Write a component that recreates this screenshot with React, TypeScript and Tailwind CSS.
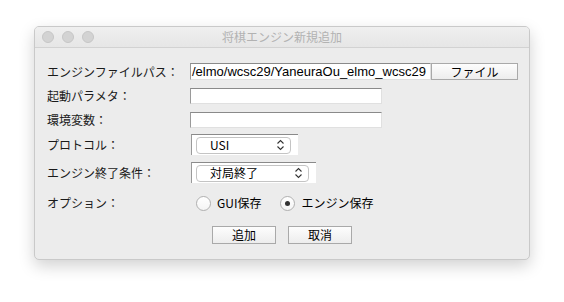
import React from 'react';

const font = { fontFamily: '"Noto Sans CJK JP", "Liberation Sans", sans-serif' };

function Field({ value, width }: { value?: string; width: number }) {
  return (
    <div
      className="h-full bg-white border-t border-l border-t-[#8a8a8a] border-l-[#9a9a9a] border-r border-b border-r-[#e0e0e0] border-b-[#e0e0e0] flex items-center overflow-hidden whitespace-nowrap text-[13px] leading-none text-black pl-[1px]"
      style={{ width, fontFamily: '"Liberation Sans", sans-serif' }}
    >
      {value}
    </div>
  );
}

function Chevrons() {
  return (
    <svg width="9" height="12" viewBox="0 0 9 12" fill="none" stroke="#333" strokeWidth="1.1">
      <path d="M1.5 4.5 L4.5 1.5 L7.5 4.5" />
      <path d="M1.5 7.5 L4.5 10.5 L7.5 7.5" />
    </svg>
  );
}

function Select({ label, width }: { label: string; width: number }) {
  return (
    <div
      className="h-full bg-white border-t border-l border-t-[#8a8a8a] border-l-[#9a9a9a] flex items-center pl-[4px] pr-[7px]"
      style={{ width }}
    >
      <div className="flex-1 h-[17px] rounded-[4px] border border-[#c4c4c4] flex items-center justify-between pl-[13px] pr-[5px] text-[12px] leading-none text-black">
        <span>{label}</span>
        <Chevrons />
      </div>
    </div>
  );
}

function Radio({ checked, label }: { checked?: boolean; label: string }) {
  return (
    <div className="flex items-center gap-[6px]">
      <div className="w-[15px] h-[15px] rounded-full border border-[#b0b0b0] bg-gradient-to-b from-white to-[#f4f4f4] flex items-center justify-center">
        {checked && <div className="w-[5px] h-[5px] rounded-full bg-[#333]" />}
      </div>
      <span className="text-[12px] leading-none text-black">{label}</span>
    </div>
  );
}

function Btn({ children, width }: { children: React.ReactNode; width: number }) {
  return (
    <div
      className="h-full border border-[#a9a9a9] bg-gradient-to-b from-[#fdfdfd] to-[#ededed] flex items-center justify-center text-[12px] leading-none text-black"
      style={{ width }}
    >
      {children}
    </div>
  );
}

function Row({ label, h, mt, children }: { label: string; h: number; mt: number; children: React.ReactNode }) {
  return (
    <div className="flex items-center" style={{ height: h, marginTop: mt }}>
      <div className="w-[143px] text-[12px] leading-none text-[#1a1a1a] whitespace-nowrap">{label}</div>
      <div className="h-full flex items-center">{children}</div>
    </div>
  );
}

export default function App() {
  return (
    <div className="w-[564px] h-[302px] bg-white overflow-hidden" style={font}>
      <div className="ml-[34px] mt-[26px] w-[496px] h-[234px] rounded-[5px] border border-[#c9c9c9] bg-[#ececec] shadow-[0_6px_16px_rgba(0,0,0,0.18)] overflow-hidden flex flex-col">
        <div className="h-[21px] shrink-0 relative flex items-center border-b border-[#d2d2d2] bg-gradient-to-b from-[#efefef] to-[#e6e6e6]">
          <div className="flex gap-[8px] pl-[7px]">
            <div className="w-[12px] h-[12px] rounded-full bg-[#d3d3d3] border border-[#c6c6c6]" />
            <div className="w-[12px] h-[12px] rounded-full bg-[#d3d3d3] border border-[#c6c6c6]" />
            <div className="w-[12px] h-[12px] rounded-full bg-[#d3d3d3] border border-[#c6c6c6]" />
          </div>
          <div className="absolute inset-0 flex items-center justify-center text-[12px] text-[#b2b2b2] leading-none">
            将棋エンジン新規追加
          </div>
        </div>
        <div className="pl-[12px] flex flex-col">
          <Row label="エンジンファイルパス：" h={17} mt={15}>
            <Field value="/elmo/wcsc29/YaneuraOu_elmo_wcsc29" width={241} />
            <Btn width={87}>ファイル</Btn>
          </Row>
          <Row label="起動パラメタ：" h={16} mt={8}>
            <Field width={192} />
          </Row>
          <Row label="環境変数：" h={16} mt={8}>
            <Field width={192} />
          </Row>
          <Row label="プロトコル：" h={21} mt={6}>
            <div className="h-full ml-[1px]">
              <Select label="USI" width={107} />
            </div>
          </Row>
          <Row label="エンジン終了条件：" h={21} mt={7}>
            <div className="h-full ml-[1px]">
              <Select label="対局終了" width={125} />
            </div>
          </Row>
          <Row label="オプション：" h={16} mt={12}>
            <div className="ml-[6px] flex items-center gap-[19px]">
              <Radio label="GUI保存" />
              <Radio checked label="エンジン保存" />
            </div>
          </Row>
          <div className="flex h-[18px] mt-[15px] pl-[165px] gap-[12px]">
            <Btn width={64}>追加</Btn>
            <Btn width={64}>取消</Btn>
          </div>
        </div>
      </div>
    </div>
  );
}
